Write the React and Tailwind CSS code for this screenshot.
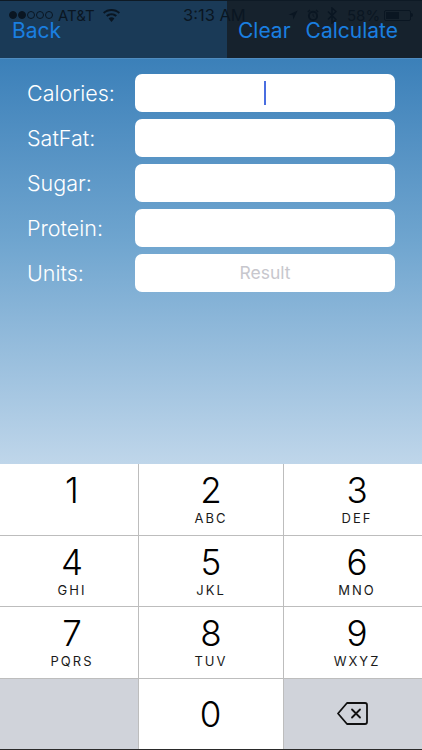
import React from 'react'

const keys = [
    {digit: '1', letters: '', cell: 'pl-[6px]'},
    {digit: '2', letters: 'ABC', cell: ''},
    {digit: '3', letters: 'DEF', cell: 'pl-[8px]'},
    {digit: '4', letters: 'GHI', cell: 'pl-[6px]'},
    {digit: '5', letters: 'JKL', cell: ''},
    {digit: '6', letters: 'MNO', cell: 'pl-[8px]'},
    {digit: '7', letters: 'PQRS', cell: 'pl-[6px]'},
    {digit: '8', letters: 'TUV', cell: ''},
    {digit: '9', letters: 'WXYZ', cell: 'pl-[8px]'},
]

const fields = ['Calories:', 'SatFat:', 'Sugar:', 'Protein:', 'Units:']

function SignalDots() {
    return (
        <div className="flex items-center gap-[1px]">
            {[0, 1].map((i) => (
                <span key={i} className="w-[8px] h-[8px] rounded-full bg-[#0a1622] border border-[#0a1622]"/>
            ))}
            {[2, 3, 4].map((i) => (
                <span key={i} className="w-[8px] h-[8px] rounded-full border border-[#0a1622]"/>
            ))}
        </div>
    )
}

function StatusBar() {
    return (
        <div className="absolute top-[5px] left-[9px] right-[5px] h-[18px] flex items-center text-[#0a1622] text-[15px] leading-none">
            <div className="flex items-center w-[174px]">
                <SignalDots/>
                <span className="ml-[5px] text-[15px]">AT&amp;T</span>
                <svg className="ml-[8px]" width="17" height="13" viewBox="0 0 17 13" fill="#0a1622">
                    <path d="M8.5 0C5.2 0 2.3 1.2 0 3.3l1.3 1.500C3.2 3 5.700 2 8.500 2s5.300 1 7.200 2.800L17 3.300C14.700 1.200 11.800 0 8.500 0z"/>
                    <path d="M8.500 4.200c-2.100 0-4 .8-5.500 2.100l1.400 1.500c1.100-1 2.500-1.600 4.100-1.600s3 .6 4.100 1.600L14 6.300C12.500 5 10.600 4.200 8.500 4.200z"/>
                    <path d="M8.500 8.300c-1.100 0-2.100.4-2.900 1.100L8.500 13l2.900-3.600c-.8-.7-1.800-1.100-2.900-1.100z"/>
                </svg>
            </div>
            <span className="w-[105px] text-[16.500px]">3:13 AM</span>
            <svg width="10" height="10" viewBox="0 0 13 13" fill="#0a1622">
                <path d="M12.500.5L.8 6.200l5.400.6.7 5.700z"/>
            </svg>
            <svg className="ml-[9px]" width="12" height="13" viewBox="0 0 14 15" fill="none" stroke="#0a1622">
                <circle cx="7" cy="8" r="4.800" strokeWidth="2.200"/>
                <path d="M7 5.500V8l1.600 1" strokeWidth="1"/>
                <path d="M1 3.500L3.500 1M13 3.500L10.500 1" strokeWidth="1.600"/>
            </svg>
            <svg className="ml-[8px]" width="10" height="17" viewBox="0 0 10 17" fill="none" stroke="#0a1622" strokeWidth="1.500">
                <path d="M1 4.500l8 8L5 16V1l4 3.500-8 8"/>
            </svg>
            <span className="ml-[10px] w-[31px] whitespace-nowrap">58%</span>
            <div className="ml-[6px] w-[27px] h-[11px] border border-[#0a1622] rounded-[2px] p-[1px]">
                <div className="h-full w-[58%] bg-[#0a1622]"/>
            </div>
            <span className="w-[2px] h-[4px] bg-[#0a1622] rounded-r-sm"/>
        </div>
    )
}

function NavBar() {
    return (
        <div className="relative flex h-[59px] border-t border-[#0e1a25] border-b border-b-[#4f8cc0] text-[21px] leading-none text-[#1a7fe0]">
            <div className="w-[227px] bg-[#1a3a57] pl-[12px] pt-[19px]">Back</div>
            <div className="flex-1 bg-[#16222d] pl-[11px] pt-[19px] flex gap-[15px]">
                <span>Clear</span>
                <span>Calculate</span>
            </div>
            <StatusBar/>
        </div>
    )
}

function Form() {
    return (
        <div className="h-[405px] bg-gradient-to-b from-[#3b80b9] via-[#6fa5cf] via-[45%] to-[#bfd6ea] pt-[15px] pl-[27px] pr-[27px] flex flex-col gap-[7px]">
            {fields.map((label, index) => (
                <div key={label} className="flex items-center h-[38px]">
                    <span className="w-[108px] text-[21.500px] leading-none font-light text-white mt-[1px]">{label}</span>
                    <div className="flex-1 h-full bg-white rounded-[7px] flex items-center justify-center">
                        {index === 0 && <span className="w-[2px] h-[24px] bg-[#4a6ee0]"/>}
                        {index === 4 && <span className="text-[17.500px] text-[#c7c7cd]">Result</span>}
                    </div>
                </div>
            ))}
        </div>
    )
}

function Key({digit, letters, cell}) {
    return (
        <div className={`bg-white flex flex-col items-center pt-[7px] text-black ${cell}`}>
            <span className="text-[35px] leading-[38px] font-light">{digit}</span>
            <span className="text-[13px] leading-[14px] tracking-[2px] mt-[2px] text-[#1a1a1a]">{letters}</span>
        </div>
    )
}

function Keypad() {
    return (
        <div className="border-b border-[#2a2a2a] bg-[#bdbdbd] grid grid-cols-[138px_144px_138px] gap-[1px] grid-rows-[71px_70px_71px_70px] w-[422px] h-[286px]">
            {keys.map((k) => <Key key={k.digit} {...k}/>)}
            <div className="bg-[#d0d3da]"/>
            <div className="bg-white flex justify-center pt-[16px] pr-[1px] text-[35px] leading-[38px] font-light text-black">0</div>
            <div className="bg-[#d0d3da] flex items-center justify-center pb-[2px] pr-[1px]">
                <svg width="31" height="23" viewBox="0 0 31 23" fill="none" stroke="#111" strokeWidth="1.800" strokeLinejoin="round">
                    <path d="M10 1h18a2 2 0 0 1 2 2v17a2 2 0 0 1-2 2H10L1 11.500z"/>
                    <path d="M15 7.500l8 8M23 7.500l-8 8" strokeLinecap="round"/>
                </svg>
            </div>
        </div>
    )
}

export default function App() {
    return (
        <div className="w-[422px] h-[750px] overflow-hidden bg-white" style={{fontFamily: 'Inter, "Liberation Sans", sans-serif'}}>
            <NavBar/>
            <Form/>
            <Keypad/>
        </div>
    )
}
